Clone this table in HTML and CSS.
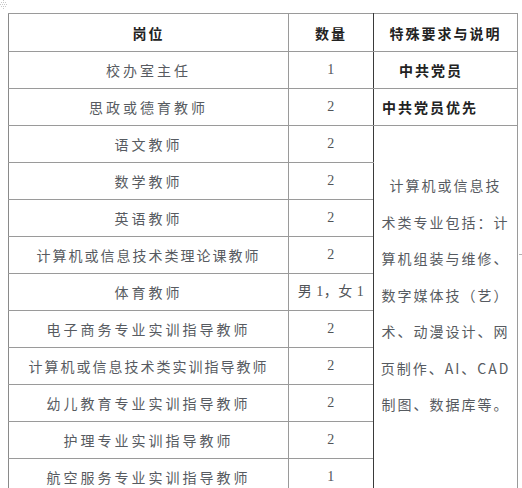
FILE: index.html
```html
<!DOCTYPE html>
<html lang="zh-CN">
<head>
<meta charset="utf-8">
<title>岗位表</title>
<link rel="stylesheet" href="styles.css">
</head>
<body>
<span class="handle" aria-hidden="true">
<svg width="8" height="10" viewBox="0 0 8 10"><g fill="#c8c8c8"><rect x="3" y="0" width="1" height="1"/><rect x="1" y="2" width="1" height="1"/><rect x="3" y="2" width="1" height="1"/><rect x="5" y="2" width="1" height="1"/><rect x="0" y="4" width="1" height="1"/><rect x="2" y="4" width="1" height="1"/><rect x="4" y="4" width="1" height="1"/><rect x="6" y="4" width="1" height="1"/><rect x="1" y="6" width="1" height="1"/><rect x="3" y="6" width="1" height="1"/><rect x="5" y="6" width="1" height="1"/><rect x="3" y="8" width="1" height="1"/></g></svg>
</span>
<span class="edge-mark" aria-hidden="true"></span>
<table class="jobs">
  <colgroup>
    <col class="c-post">
    <col class="c-num">
    <col class="c-note">
  </colgroup>
  <tr class="head">
    <th>岗位</th>
    <th>数量</th>
    <th class="note-head">特殊要求与说明</th>
  </tr>
  <tr>
    <td class="post">校办室主任</td>
    <td class="num">1</td>
    <td class="req req-indent">中共党员</td>
  </tr>
  <tr>
    <td class="post">思政或德育教师</td>
    <td class="num">2</td>
    <td class="req">中共党员优先</td>
  </tr>
  <tr>
    <td class="post">语文教师</td>
    <td class="num">2</td>
    <td class="merged" rowspan="10"><div class="merged-text">计算机或信息技<br>术类专业包括：计<br>算机组装与维修、<br>数字媒体技（艺）<br>术、动漫设计、网<br>页制作、AI、CAD<br>制图、数据库等。</div></td>
  </tr>
  <tr>
    <td class="post">数学教师</td>
    <td class="num">2</td>
  </tr>
  <tr>
    <td class="post">英语教师</td>
    <td class="num">2</td>
  </tr>
  <tr>
    <td class="post tight">计算机或信息技术类理论课教师</td>
    <td class="num">2</td>
  </tr>
  <tr>
    <td class="post">体育教师</td>
    <td class="num">男 1，女 1</td>
  </tr>
  <tr>
    <td class="post">电子商务专业实训指导教师</td>
    <td class="num">2</td>
  </tr>
  <tr>
    <td class="post tight">计算机或信息技术类实训指导教师</td>
    <td class="num">2</td>
  </tr>
  <tr>
    <td class="post">幼儿教育专业实训指导教师</td>
    <td class="num">2</td>
  </tr>
  <tr>
    <td class="post">护理专业实训指导教师</td>
    <td class="num">2</td>
  </tr>
  <tr>
    <td class="post">航空服务专业实训指导教师</td>
    <td class="num">1</td>
  </tr>
</table>
</body>
</html>
```

FILE: styles.css
```css
html, body {
  margin: 0;
  padding: 0;
  background: #ffffff;
}
body {
  position: relative;
  width: 522px;
  height: 488px;
  overflow: hidden;
  font-family: "Noto Sans CJK SC", sans-serif;
  padding: 13px 0 0 8px;
  box-sizing: border-box;
}
.handle {
  position: absolute;
  left: 0;
  top: 0;
  width: 8px;
  height: 10px;
  line-height: 0;
}
.edge-mark {
  position: absolute;
  left: 519px;
  top: 254px;
  width: 3px;
  height: 1px;
  background: #b0b0b0;
}
.jobs {
  border-collapse: collapse;
  table-layout: fixed;
  width: 509px;
}
.c-post { width: 280px; }
.c-num { width: 85px; }
.c-note { width: 144px; }
.jobs th, .jobs td {
  border: 1px solid #9a9a9a;
  height: 36px;
  padding: 0;
  text-align: center;
  vertical-align: middle;
  white-space: nowrap;
  font-size: 14px;
  line-height: 20px;
}
.jobs .head th {
  height: 37px;
}
.jobs tr > :first-child {
  border-left-color: #8a8a8a;
}
.jobs tr > :nth-child(2) {
  border-right: 1px solid #3a3a3a;
}
.jobs .merged {
  border-left: 1px solid #3a3a3a;
}
.head th {
  font-weight: 600;
  color: #222222;
  letter-spacing: 2px;
}
.post {
  color: #575b61;
  font-weight: 400;
  letter-spacing: 3px;
}
.post.tight {
  letter-spacing: 2px;
}
.num {
  font-family: "Liberation Serif", "Noto Sans CJK SC", serif;
  font-size: 16px;
  color: #505458;
  letter-spacing: 0.5px;
}
.req {
  text-align: left !important;
  padding-left: 8px !important;
  font-weight: 600;
  color: #222222;
  letter-spacing: 2px;
}
.req-indent {
  padding-left: 25px !important;
}
.merged {
  vertical-align: top !important;
  white-space: normal !important;
}
.merged-text {
  padding-top: 41px;
  line-height: 36.5px;
  color: #575b61;
  font-size: 14px;
  letter-spacing: 2px;
  text-align: center;
}
```
